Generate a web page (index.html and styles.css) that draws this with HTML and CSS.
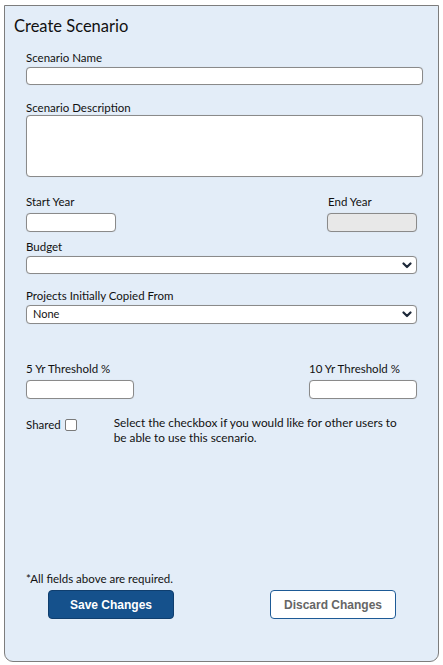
FILE: index.html
```html
<!DOCTYPE html>
<html>
<head>
<meta charset="utf-8">
<link rel="stylesheet" href="styles.css">
</head>
<body>
<div class="panel">
  <h1 class="title">Create Scenario</h1>
  <div class="form">
    <label class="lbl lbl-name">Scenario Name</label>
    <input class="field field-name" type="text">

    <label class="lbl lbl-desc">Scenario Description</label>
    <textarea class="field area"></textarea>

    <div class="row row-years">
      <div class="col">
        <label class="lbl">Start Year</label>
        <input class="field year" type="text">
      </div>
      <div class="col">
        <label class="lbl">End Year</label>
        <input class="field year disabled" type="text" disabled>
      </div>
    </div>

    <label class="lbl lbl-budget">Budget</label>
    <div class="selwrap sel-budget">
      <div class="field sel"></div>
      <svg class="chev" width="10" height="7" viewBox="0 0 10 7"><path d="M1.5 1.5 L5 5 L8.5 1.5" fill="none" stroke="#1d2939" stroke-width="2.2" stroke-linecap="round" stroke-linejoin="round"/></svg>
    </div>

    <label class="lbl lbl-proj">Projects Initially Copied From</label>
    <div class="selwrap sel-proj">
      <div class="field sel">None</div>
      <svg class="chev" width="10" height="7" viewBox="0 0 10 7"><path d="M1.5 1.5 L5 5 L8.5 1.5" fill="none" stroke="#1d2939" stroke-width="2.2" stroke-linecap="round" stroke-linejoin="round"/></svg>
    </div>

    <div class="row row-thresh">
      <div class="col">
        <label class="lbl">5 Yr Threshold %</label>
        <input class="field thresh" type="text">
      </div>
      <div class="col">
        <label class="lbl">10 Yr Threshold %</label>
        <input class="field thresh" type="text">
      </div>
    </div>

    <div class="shared">
      <span class="shared-lbl">Shared</span>
      <span class="check"></span>
      <p class="hint">Select the checkbox if you would like for other users to be able to use this scenario.</p>
    </div>

    <p class="req">*All fields above are required.</p>
    <div class="buttons">
      <button class="btn save">Save Changes</button>
      <button class="btn discard">Discard Changes</button>
    </div>
  </div>
</div>
</body>
</html>
```
FILE: styles.css
```css
html, body {
  margin: 0;
  padding: 0;
  background: #ffffff;
}
body {
  font-family: Lato, "Open Sans", sans-serif;
  color: #111;
}
.panel {
  box-sizing: border-box;
  margin: 5px 0 0 4px;
  width: 435px;
  height: 657px;
  border: 1px solid #7d7d7d;
  border-radius: 0 0 9px 9px;
  background: #e3edf8;
  padding: 10px 0 0 0;
}
.title {
  margin: 0 0 0 9px;
  font-size: 16.5px;
  line-height: 20px;
  font-weight: normal;
  color: #111;
}
.form {
  padding-left: 21px;
}
.lbl {
  display: block;
  font-size: 11.5px;
  line-height: 14px;
  color: #111;
}
.lbl-name { margin-top: 15px; }
.field {
  box-sizing: border-box;
  display: block;
  border: 1px solid #8a8a8a;
  border-radius: 4px;
  background: #fff;
  box-shadow: 0 0 1px rgba(0,0,0,0.15);
  padding: 0;
  margin: 0;
  font-family: inherit;
}
.field-name {
  margin-top: 2px;
  width: 397px;
  height: 18px;
}
.lbl-desc { margin-top: 16px; }
.area {
  width: 397px;
  height: 62px;
  resize: none;
}
.row {
  display: flex;
  justify-content: space-between;
  width: 391px;
}
.row-years { margin-top: 18px; }
.col { display: flex; flex-direction: column; }
.year {
  margin-top: 4px;
  width: 90px;
  height: 19px;
}
.disabled {
  background: #e8e8e8;
}
.row-years .col:last-child .lbl { padding-left: 1px; }
.lbl-budget { margin-top: 8px; }
.selwrap {
  position: relative;
  width: 391px;
  margin-top: 2px;
}
.sel {
  width: 391px;
  height: 18px;
  font-size: 11px;
  line-height: 16px;
  padding-left: 6px;
  color: #111;
}
.chev {
  position: absolute;
  right: 5px;
  top: 6px;
}
.lbl-proj { margin-top: 15px; }
.sel-proj .sel { height: 19px; }
.row-thresh { margin-top: 38px; }
.thresh {
  margin-top: 4px;
  width: 108px;
  height: 19px;
}
.shared {
  display: flex;
  align-items: flex-start;
  margin-top: 17px;
  font-size: 11.5px;
  line-height: 15px;
  color: #111;
}
.shared-lbl {
  margin-top: 1px;
}
.check {
  box-sizing: border-box;
  width: 12px;
  height: 12px;
  border: 1px solid #7a7a7a;
  border-radius: 2px;
  background: #fff;
  margin: 3px 0 0 4px;
}
.hint {
  margin: -1px 0 0 37px;
  width: 290px;
  font-size: 11.8px;
}
.req {
  margin: 127px 0 0 0;
  font-size: 11.5px;
  line-height: 14px;
  color: #111;
}
.buttons {
  display: flex;
  gap: 96px;
  margin-top: 4px;
  padding-left: 22px;
}
.btn {
  box-sizing: border-box;
  width: 126px;
  height: 29px;
  border-radius: 4px;
  font-family: "Liberation Sans", Arial, sans-serif;
  font-weight: bold;
  font-size: 12px;
  cursor: pointer;
}
.save {
  background: #15518c;
  border: 1px solid #0f3e6e;
  color: #fff;
}
.discard {
  background: #fff;
  border: 1px solid #1d5a96;
  color: #666;
}
```
